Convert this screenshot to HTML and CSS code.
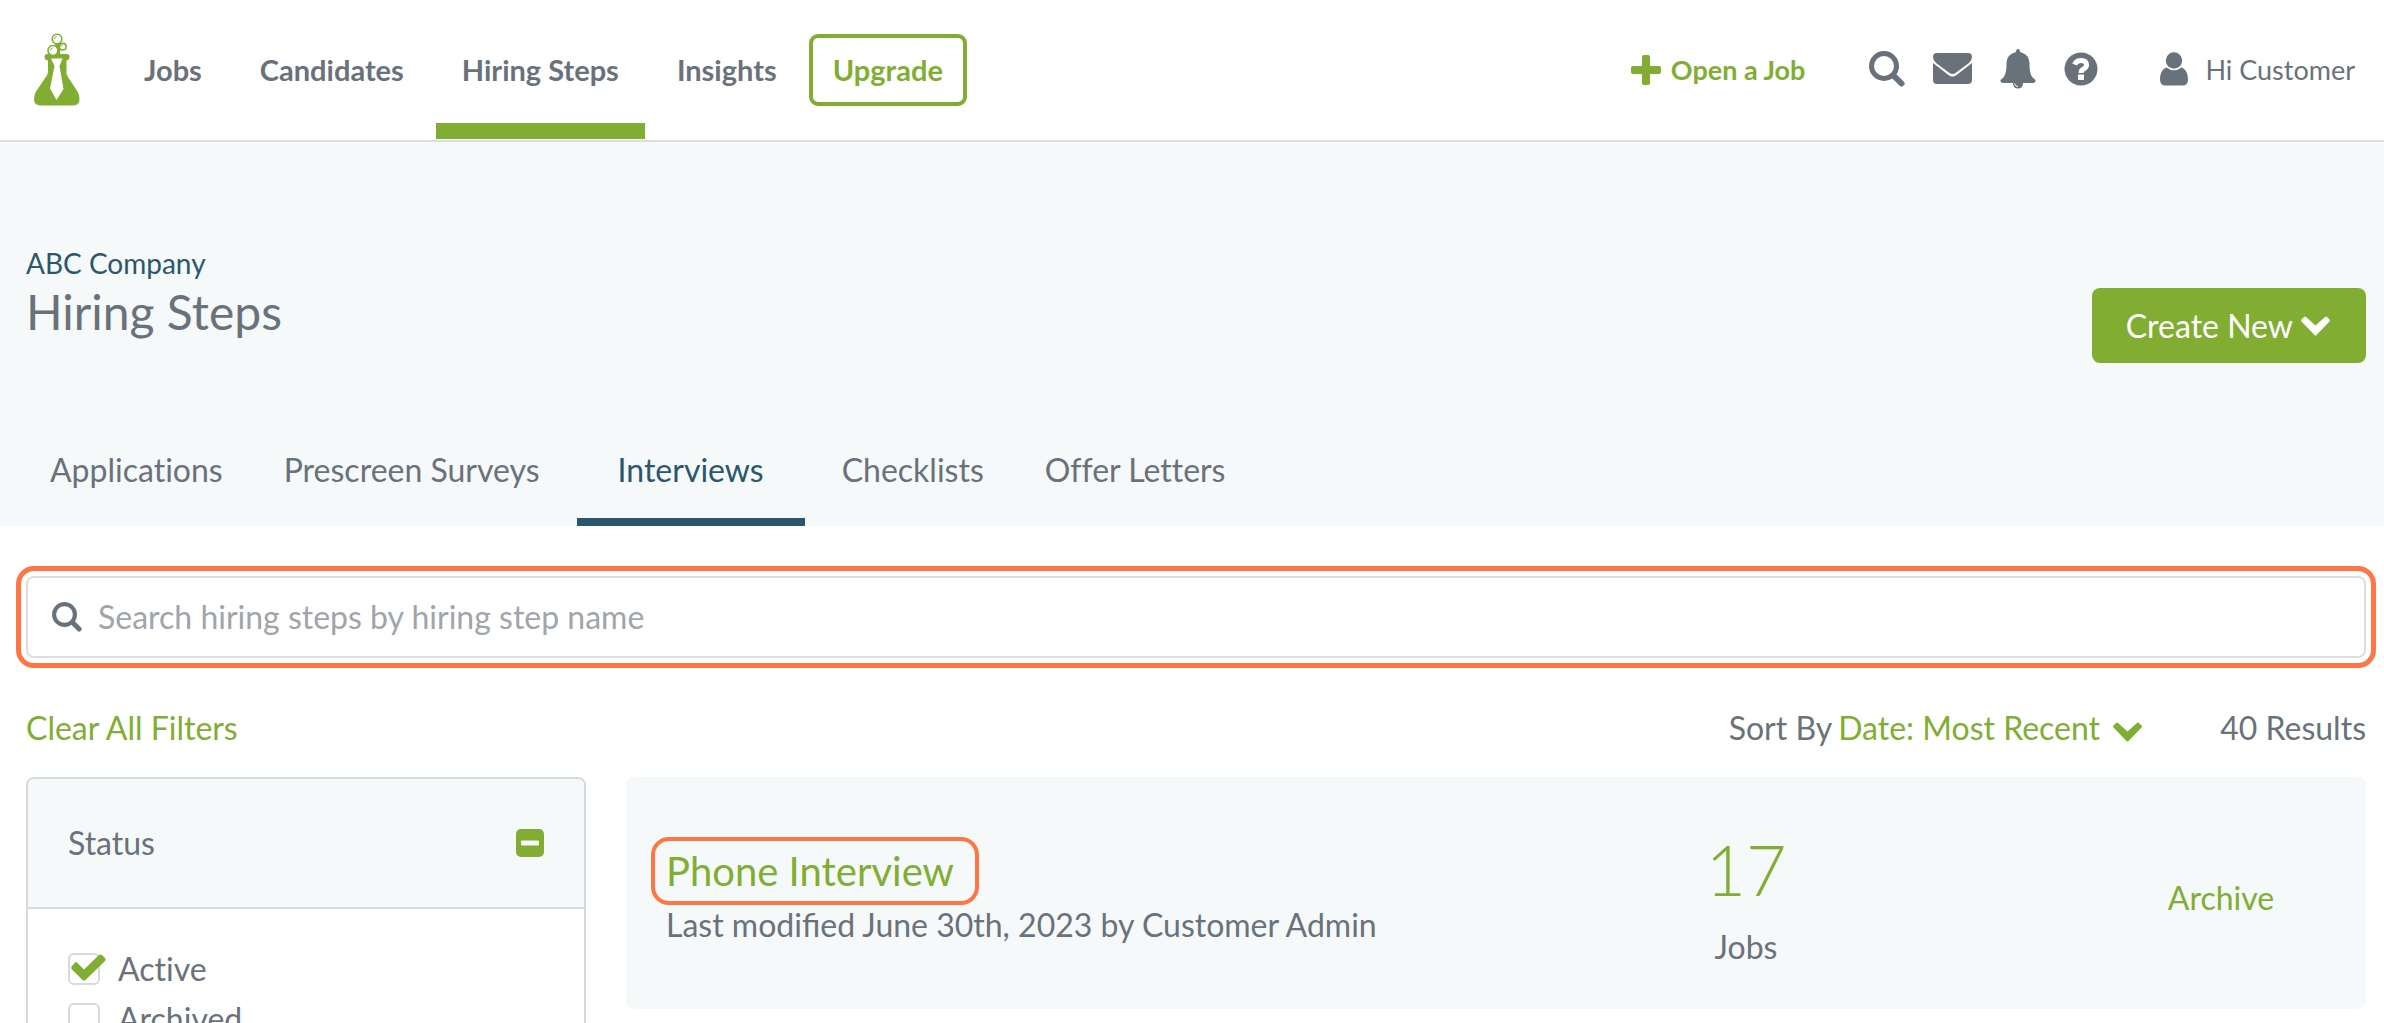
FILE: index.html
```html
<!DOCTYPE html>
<html lang="en">
<head>
<meta charset="utf-8">
<meta name="viewport" content="width=device-width, initial-scale=1">
<title>Hiring Steps</title>
<link rel="stylesheet" href="styles.css">
</head>
<body>
<header class="topbar">
  <a class="logo" href="#" aria-label="Home">
    <svg width="46" height="74" viewBox="34 33 46 74" aria-hidden="true">
      <path fill="#81ae32" d="M47 54H67Q69.500 54 69.500 57Q69.500 60 66.500 60.500V73Q66.500 75 68 77L77.500 91.500Q79.500 95 79.500 99Q79.500 105.500 73 105.500H40.500Q34 105.500 34 99Q34 95 36 91.500L46.500 76Q48 74 48 71V60.500Q44.500 60 44.500 57Q44.500 54 47 54Z"/>
      <path fill="#fff" d="M51 58.500H62.500L59.500 66L63.500 89L56.500 100L50 88.500L54.500 66Z"/>
      <path fill="#81ae32" d="M55 42L61 43L60 55H56Z"/>
      <g fill="#fff" stroke="#81ae32" stroke-width="1.600">
        <circle cx="57" cy="39" r="4.800"/><circle cx="62.800" cy="46.700" r="3.300"/><circle cx="53" cy="50.500" r="5"/>
      </g>
      <path fill="none" stroke="#81ae32" d="M54.500 39Q54.500 37 56.500 36.500M50.500 50.500Q50.500 48.500 52.500 48M61.200 46.500Q61.500 45.500 62.500 45.200"/>
    </svg>
  </a>
  <nav class="mainnav" aria-label="Main">
    <a href="#">Jobs</a>
    <a href="#">Candidates</a>
    <a href="#" class="current" aria-current="page">Hiring Steps</a>
    <a href="#">Insights</a>
  </nav>
  <a class="upgrade" href="#">Upgrade</a>
  <div class="tools">
    <a class="open-job" href="#">
      <svg width="30" height="30" viewBox="0 0 30 30" aria-hidden="true"><path fill="currentColor" d="M13 0H17Q19 0 19 2V11H28Q30 11 30 13V17Q30 19 28 19H19V28Q19 30 17 30H13Q11 30 11 28V19H2Q0 19 0 17V13Q0 11 2 11H11V2Q11 0 13 0Z"/></svg>
      Open a Job
    </a>
    <div class="icons">
      <button type="button" aria-label="Search"><svg width="36" height="36" viewBox="0 0 36 36" aria-hidden="true"><g fill="none" stroke="currentColor"><circle cx="15" cy="15" r="12.500" stroke-width="5"/><path stroke-width="6" stroke-linecap="round" d="M25 25L32.500 32.500"/></g></svg></button>
      <button type="button" aria-label="Messages"><svg width="39" height="32" viewBox="0 0 39 32" aria-hidden="true"><path fill="currentColor" d="M4 0H35Q39 0 39 4Q39 7 36 10L22.500 20Q19.500 22 16.500 20L3 10Q0 7 0 4Q0 0 4 0ZM0 10L15.500 22Q19.500 25 23.500 22L39 10V27Q39 31 35 31H4Q0 31 0 27Z"/></svg></button>
      <button type="button" aria-label="Notifications"><svg width="36" height="40" viewBox="0 0 36 40" aria-hidden="true"><path fill="currentColor" d="M18 0Q20 0 20 3Q29 5 29.500 14C29.500 24 31 28 35.500 31Q36 34 33 34H23Q23 39.500 18 39.500Q13 39.500 13 34H3Q0 34 .5 31C5 28 6.500 24 6.500 14Q7 5 16 3Q16 0 18 0Z"/><path fill="none" stroke="#fff" d="M14.500 34.500Q15 37.500 18 37.500"/></svg></button>
      <button type="button" aria-label="Help"><svg width="34" height="34" viewBox="0 0 34 34" aria-hidden="true"><circle cx="17" cy="17" r="16.500" fill="currentColor"/><path fill="none" stroke="#fff" stroke-width="5" d="M10.500 12.500Q12.500 8.500 17 8.500Q22.500 8.500 22.500 13Q22.500 15.500 19.500 17Q17 18.300 17 21"/><path fill="#fff" d="M14 22.500H20V28H14Z"/></svg></button>
    </div>
    <a class="account" href="#">
      <svg width="28" height="36" viewBox="0 0 28 36" aria-hidden="true"><circle cx="14" cy="8.500" r="8.200" fill="currentColor"/><path fill="currentColor" d="M6.500 15.500Q14 21 21.500 15.500C26 17 28 22 28 27.500Q28 33.500 22.500 33.500H5.500Q0 33.500 0 27.500C0 22 2 17 6.500 15.500Z"/></svg>
      Hi Customer
    </a>
  </div>
</header>

<section class="hero">
  <div class="hero-row">
    <div class="titles">
      <a class="company" href="#">ABC Company</a>
      <h1>Hiring Steps</h1>
    </div>
    <button class="create" type="button">Create New
      <svg width="29" height="20" viewBox="0 0 29 20" aria-hidden="true"><path fill="currentColor" d="M3 1Q4 0 5 1L14.500 9.500L24 1Q25 0 26 1L28.500 3.500Q29.500 4.500 28.500 5.500L15.500 19Q14.500 20 13.500 19L.5 5.500Q-.5 4.500 .5 3.500Z"/></svg>
    </button>
  </div>
  <nav class="tabs" aria-label="Hiring step types">
    <a href="#">Applications</a>
    <a href="#">Prescreen Surveys</a>
    <a href="#" class="active" aria-current="page">Interviews</a>
    <a href="#">Checklists</a>
    <a href="#">Offer Letters</a>
  </nav>
</section>

<main class="main">
  <form class="search" role="search">
    <svg width="30" height="30" viewBox="0 0 36 36" aria-hidden="true"><g fill="none" stroke="currentColor"><circle cx="15" cy="15" r="12.500" stroke-width="5"/><path stroke-width="6" stroke-linecap="round" d="M25 25L32.500 32.500"/></g></svg>
    <input type="text" aria-label="Search hiring steps" placeholder="Search hiring steps by hiring step name">
  </form>

  <div class="filters">
    <a class="clear" href="#">Clear All Filters</a>
    <div class="sort">
      <label for="sort">Sort By</label>
      <span class="sort-pick">
        <select id="sort"><option>Date: Most Recent</option></select>
        <svg width="29" height="20" viewBox="0 0 29 20" aria-hidden="true"><path fill="currentColor" d="M3 1Q4 0 5 1L14.500 9.500L24 1Q25 0 26 1L28.500 3.500Q29.500 4.500 28.500 5.500L15.500 19Q14.500 20 13.500 19L.5 5.500Q-.5 4.500 .5 3.500Z"/></svg>
      </span>
    </div>
    <span class="count">40 Results</span>
  </div>

  <div class="columns">
    <aside class="panel">
      <div class="panel-head">
        <h2>Status</h2>
        <button type="button" aria-label="Collapse status filter"><svg width="28" height="28" viewBox="0 0 28 28" aria-hidden="true"><rect width="28" height="28" rx="5" fill="currentColor"/><rect x="5" y="11.500" width="18" height="5" rx="1" fill="#f5f9fa"/></svg></button>
      </div>
      <div class="panel-body">
        <label class="check"><input type="checkbox" checked><svg width="35" height="27" viewBox="0 0 35 27" aria-hidden="true"><path fill="currentColor" d="M4 8.500Q5 7.500 6 8.500L13 15.500L28 1Q29.500 0 31 1L34 4Q35 5.500 34 7L14.500 26Q13 27 11.500 26L1 15.500Q-.5 13.500 1 12Z"/></svg>Active</label>
        <label class="check"><input type="checkbox">Archived</label>
      </div>
    </aside>

    <article class="card">
      <div class="info">
        <a class="name" href="#">Phone Interview</a>
        <p class="meta">Last modified June 30th, 2023 by Customer Admin</p>
      </div>
      <div class="jobs">
        <a class="number" href="#">17</a>
        <span>Jobs</span>
      </div>
      <div class="action"><a href="#">Archive</a></div>
    </article>
  </div>
</main>
</body>
</html>
```
FILE: styles.css
```css
* {
  box-sizing: border-box;
}

body {
  margin: 0;
  height: 100vh;
  overflow: hidden;
  background: #fff;
  color: #69727b;
  font-family: Lato, "Liberation Sans", sans-serif;
  font-size: 32px;
  line-height: 40px;
  font-variant-ligatures: no-common-ligatures;
}

a {
  color: #81ae32;
  text-decoration: none;
}

button {
  padding: 0;
  border: 0;
  background: none;
  color: inherit;
  font: inherit;
  cursor: pointer;
}

svg {
  display: block;
  flex: none;
}

h1,
h2,
p {
  margin: 0;
  font-weight: 400;
}

/* Top bar */
.topbar {
  display: flex;
  align-items: center;
  height: 142px;
  padding: 0 29px 0 34px;
  border-bottom: 2px solid #ddd;
  font-size: 29px;
  white-space: nowrap;
}

.mainnav {
  display: flex;
  align-self: stretch;
  gap: 6px;
  margin-left: 38px;
  font-weight: 700;
}

.mainnav a {
  display: flex;
  align-items: center;
  margin-bottom: 1px;
  padding: 16px 26px 0;
  border-bottom: 16px solid transparent;
  color: #69727b;
}

.mainnav .current {
  border-color: #81ae32;
}

.upgrade {
  margin-left: 6px;
  padding: 12px 20px;
  border: 4px solid #81ae32;
  border-radius: 9px;
  font-weight: 700;
}

.tools {
  display: flex;
  align-items: center;
  margin-left: auto;
  font-size: 27px;
}

.open-job {
  display: flex;
  align-items: center;
  gap: 10px;
  font-weight: 700;
}

.icons {
  display: flex;
  align-items: center;
  gap: 28px;
  margin: 0 62px 0 64px;
  padding-bottom: 2px;
}

.account {
  display: flex;
  align-items: center;
  gap: 17px;
  color: #69727b;
}

/* Page heading */
.hero {
  padding: 103px 18px 0 26px;
  background: #f5f9fa;
}

.hero-row {
  display: flex;
  justify-content: space-between;
  align-items: flex-end;
}

.titles {
  padding-bottom: 20px;
}

.company {
  display: block;
  color: #2a576c;
  font-size: 28px;
  line-height: 36px;
}

h1 {
  font-size: 48px;
  line-height: 62px;
}

.create {
  display: flex;
  align-items: center;
  gap: 8px;
  height: 75px;
  padding: 0 36px 0 34px;
  border-radius: 8px;
  background: #81ae32;
  color: #fff;
}

.tabs {
  display: flex;
  gap: 13px;
  margin-top: 59px;
}

.tabs a {
  padding: 28px 24px;
  border-bottom: 8px solid transparent;
  color: #69727b;
}

.tabs .active {
  padding: 28px 41px;
  border-color: #2a576c;
  color: #2a576c;
}

/* Search and sorting */
.main {
  padding: 50px 18px 0 26px;
}

.search {
  display: flex;
  align-items: center;
  gap: 16px;
  height: 82px;
  padding: 0 24px;
  border: 2px solid #ddd;
  border-radius: 8px;
  outline: 5px solid #ff7544;
  outline-offset: 5px;
}

.search input {
  flex: 1;
  min-width: 0;
  padding: 0;
  border: 0;
  outline: 0;
  background: none;
  color: inherit;
  font: inherit;
}

.search input::placeholder {
  color: #9fa5aa;
  opacity: 1;
}

.filters {
  display: flex;
  align-items: center;
  margin: 50px 0 29px;
}

.sort {
  display: flex;
  gap: 6px;
  margin-left: auto;
}

.sort-pick {
  display: flex;
  position: relative;
  color: #81ae32;
}

.sort-pick select {
  appearance: none;
  margin: 0;
  padding: 0 42px 0 0;
  border: 0;
  background: none;
  color: inherit;
  font: inherit;
}

.sort-pick svg {
  position: absolute;
  right: 0;
  top: 14px;
  pointer-events: none;
}

.count {
  margin-left: 78px;
}

/* Filter panel and results */
.columns {
  display: grid;
  grid-template-columns: 560px 1fr;
  gap: 40px;
  align-items: start;
}

.panel {
  overflow: hidden;
  border: 2px solid #d6dade;
  border-radius: 8px;
}

.panel-head {
  display: flex;
  justify-content: space-between;
  align-items: center;
  height: 130px;
  padding: 0 40px;
  border-bottom: 2px solid #d6dade;
  background: #f5f9fa;
}

.panel-head h2 {
  font-size: 32px;
}

.panel-head button {
  color: #81ae32;
}

.panel-body {
  display: flex;
  flex-direction: column;
  gap: 10px;
  padding: 40px;
}

.check {
  display: flex;
  position: relative;
  align-items: center;
  gap: 18px;
}

.check input {
  appearance: none;
  width: 32px;
  height: 32px;
  margin: 0;
  border: 2px solid #d6dade;
  border-radius: 6px;
  background: #fff;
}

.check svg {
  position: absolute;
  left: 3px;
  top: 5px;
  color: #81ae32;
}

.card {
  display: grid;
  grid-template-columns: 79fr 66fr 29fr;
  align-items: center;
  padding: 42px 0;
  border-radius: 8px;
  background: #f5f9fa;
}

.info {
  padding: 0 0 4px 25px;
}

.name {
  display: block;
  width: fit-content;
  padding: 6px 21px 6px 11px;
  border: 4px solid #ff7544;
  border-radius: 18px;
  font-size: 40px;
  line-height: 48px;
}

.meta {
  padding-left: 15px;
  font-variant-ligatures: normal;
}

.jobs {
  display: flex;
  flex-direction: column;
  align-items: center;
  gap: 8px;
}

.number {
  font-size: 70px;
  font-weight: 300;
  line-height: 100px;
}

.action {
  padding-top: 10px;
  text-align: center;
}
```
